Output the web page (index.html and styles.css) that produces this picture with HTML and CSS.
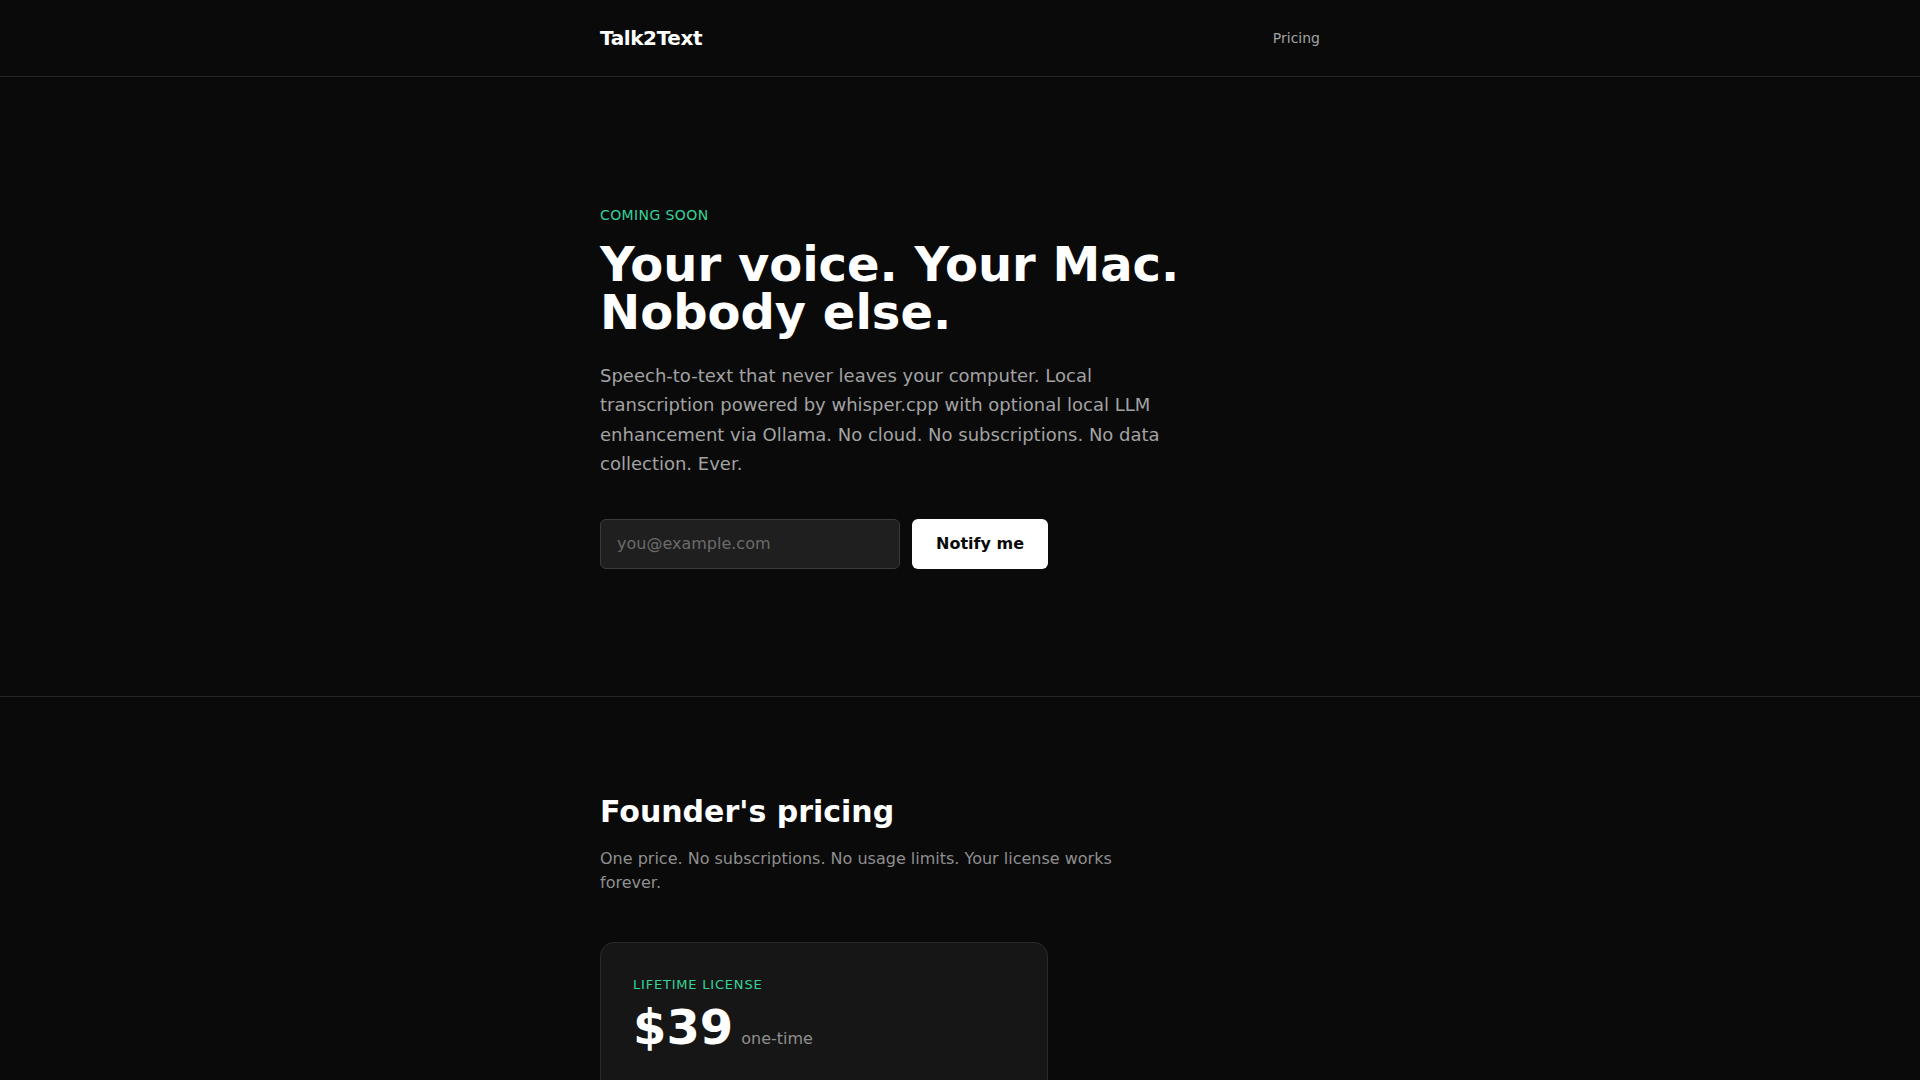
FILE: index.html
```html
<!DOCTYPE html>
<html lang="en">
<head>
    <meta charset="UTF-8">
    <meta name="viewport" content="width=device-width, initial-scale=1.0">
    <title>Talk2Text</title>
    <link rel="stylesheet" href="styles.css">
</head>
<body>
    <header class="nav">
        <div class="container nav-inner">
            <a class="logo" href="#">Talk2Text</a>
            <a class="nav-link" href="#pricing">Pricing</a>
        </div>
    </header>

    <section class="hero">
        <div class="container">
            <div class="eyebrow">COMING SOON</div>
            <h1>Your voice. Your Mac.<br>Nobody else.</h1>
            <p class="lead">Speech-to-text that never leaves your computer. Local transcription powered by whisper.cpp with optional local LLM enhancement via Ollama. No cloud. No subscriptions. No data collection. Ever.</p>
            <form class="signup" onsubmit="return false">
                <input type="email" placeholder="you@example.com">
                <button type="submit">Notify me</button>
            </form>
        </div>
    </section>

    <section class="pricing" id="pricing">
        <div class="container">
            <h2>Founder's pricing</h2>
            <p class="sub">One price. No subscriptions. No usage limits. Your license works forever.</p>
            <div class="card">
                <div class="eyebrow small">LIFETIME LICENSE</div>
                <div class="price">
                    <span class="amount">$39</span>
                    <span class="term">one-time</span>
                </div>
                <ul class="features">
                    <li>Lifetime license, all future v1 updates</li>
                    <li>Runs fully offline on Apple Silicon</li>
                    <li>Optional Ollama enhancement</li>
                </ul>
            </div>
        </div>
    </section>
</body>
</html>
```

FILE: styles.css
```css
* {
    box-sizing: border-box;
}

body {
    margin: 0;
    background-color: #0a0a0a;
    color: #ffffff;
    font-family: "DejaVu Sans", sans-serif;
}

a {
    text-decoration: none;
}

.container {
    max-width: 720px;
    margin: 0 auto;
}

.nav {
    height: 77px;
    border-bottom: 1px solid #262626;
}

.nav-inner {
    height: 100%;
    display: flex;
    justify-content: space-between;
    align-items: center;
}

.logo {
    color: #ffffff;
    font-weight: bold;
    font-size: 20px;
    letter-spacing: -0.4px;
}

.nav-link {
    color: #a3a3a3;
    font-size: 14px;
}

.hero {
    padding: 128px 0 127px;
    border-bottom: 1px solid #262626;
}

.eyebrow {
    color: #34d399;
    font-size: 14px;
    letter-spacing: 0.4px;
    line-height: 20px;
}

.eyebrow.small {
    font-size: 13px;
    letter-spacing: 0.8px;
}

h1 {
    margin: 15px 0 25px;
    font-size: 48px;
    line-height: 48px;
    font-weight: bold;
}

.lead {
    max-width: 560px;
    margin: 0 0 40px;
    color: #a3a3a3;
    font-size: 18px;
    line-height: 29.4px;
}

.signup {
    display: flex;
    gap: 12px;
}

.signup input {
    width: 300px;
    height: 50px;
    padding: 0 16px;
    background-color: #1f1f1f;
    border: 1px solid #3a3a3a;
    border-radius: 6px;
    color: #ffffff;
    font-family: inherit;
    font-size: 16px;
    outline: none;
}

.signup input::placeholder {
    color: #6b6b6b;
}

.signup button {
    height: 50px;
    padding: 0 24px;
    background-color: #ffffff;
    color: #0a0a0a;
    border: none;
    border-radius: 6px;
    font-family: inherit;
    font-size: 16px;
    font-weight: bold;
    cursor: pointer;
}

.pricing {
    padding: 96px 0;
}

h2 {
    margin: 0 0 16px;
    font-size: 30px;
    line-height: 38px;
}

.sub {
    max-width: 560px;
    margin: 0 0 47px;
    color: #8f8f8f;
    font-size: 16px;
    line-height: 24px;
}

.card {
    width: 448px;
    padding: 32px;
    background-color: #161616;
    border: 1px solid #2a2a2a;
    border-radius: 14px;
}

.price {
    display: flex;
    align-items: baseline;
    gap: 8px;
    margin-top: 2px;
}

.amount {
    font-size: 48px;
    font-weight: bold;
    line-height: 60px;
}

.term {
    color: #8f8f8f;
    font-size: 16px;
}

.features {
    list-style: none;
    margin: 20px 0 0;
    padding: 0;
}

.features li {
    position: relative;
    padding-left: 26px;
    margin-bottom: 12px;
    color: #d4d4d4;
    font-size: 15px;
    line-height: 22px;
}

.features li::before {
    content: "\2713";
    position: absolute;
    left: 0;
    color: #34d399;
}
```
